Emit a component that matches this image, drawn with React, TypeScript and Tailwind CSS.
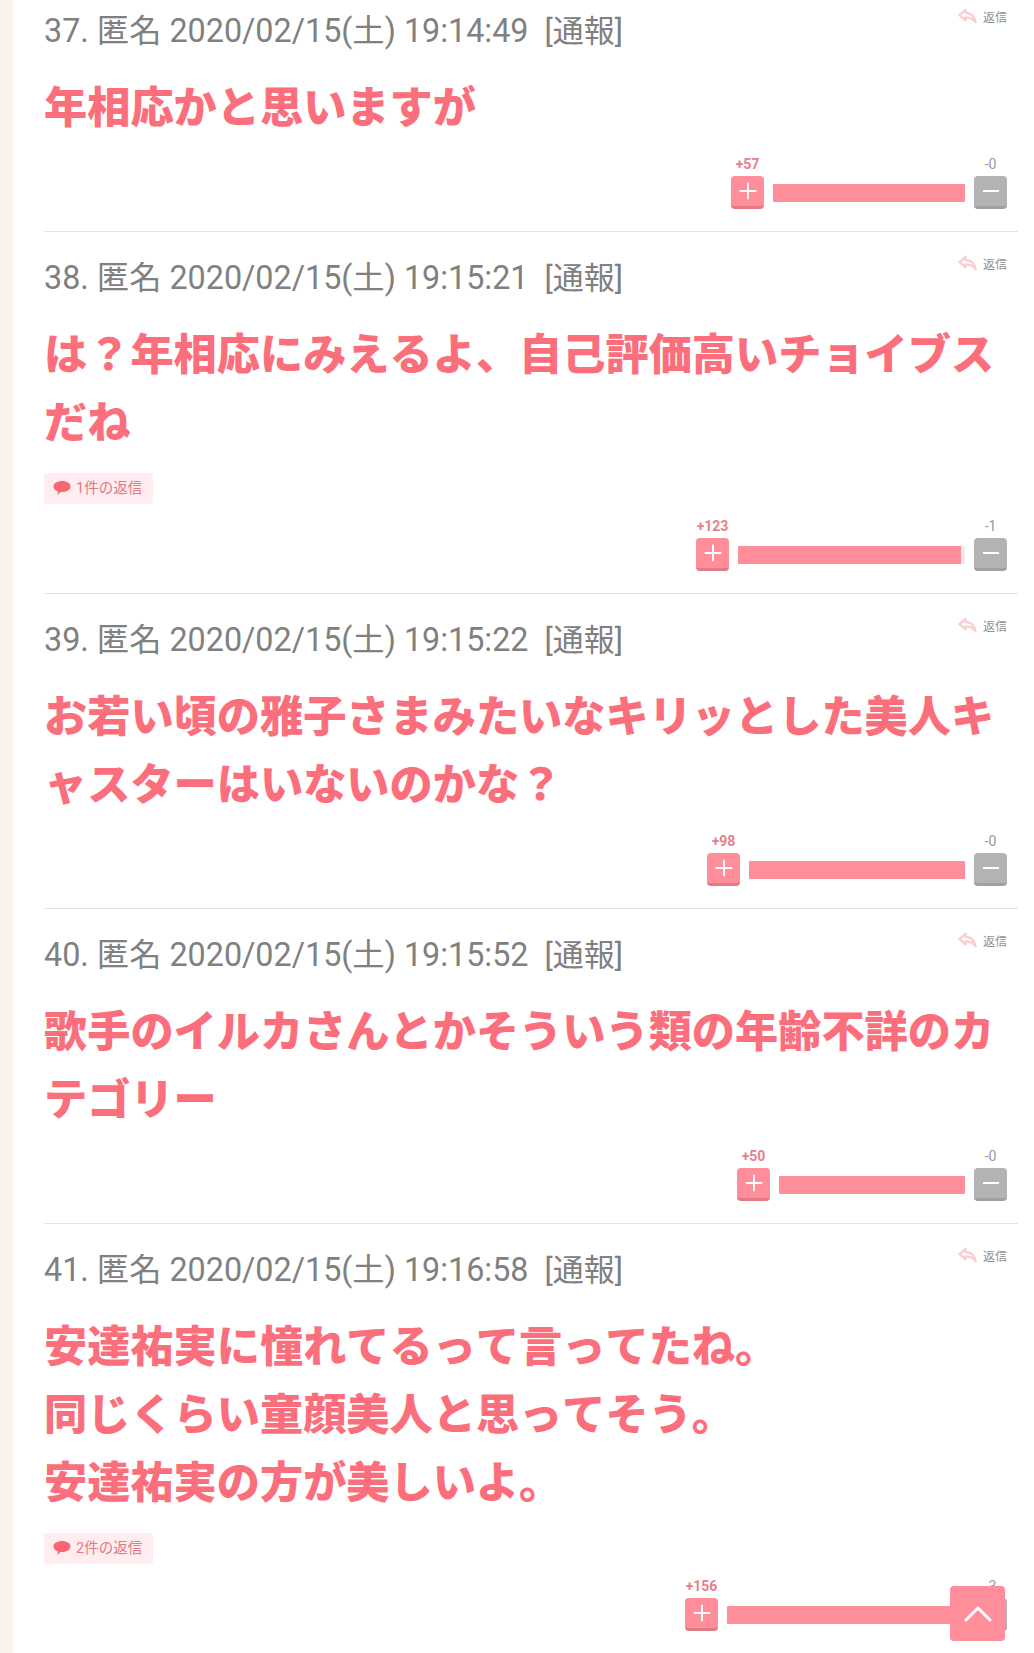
import { ChevronUp, Plus } from "lucide-react";

type Comment = {
  no: number;
  time: string;
  lines: string[];
  replies?: number;
  up: number;
  down: number;
  barW: string;
  pad: string;
};

const comments: Comment[] = [
  { no: 37, time: "19:14:49", lines: ["年相応かと思いますが"], up: 57, down: 0, barW: "w-[192px]", pad: "pt-[9px]" },
  { no: 38, time: "19:15:21", lines: ["は？年相応にみえるよ、自己評価高いチョイブス", "だね"], replies: 1, up: 123, down: 1, barW: "w-[227px]", pad: "pt-[24px]" },
  { no: 39, time: "19:15:22", lines: ["お若い頃の雅子さまみたいなキリッとした美人キ", "ャスターはいないのかな？"], up: 98, down: 0, barW: "w-[216px]", pad: "pt-[24px]" },
  { no: 40, time: "19:15:52", lines: ["歌手のイルカさんとかそういう類の年齢不詳のカ", "テゴリー"], up: 50, down: 0, barW: "w-[186px]", pad: "pt-[24px]" },
  { no: 41, time: "19:16:58", lines: ["安達祐実に憧れてるって言ってたね。", "同じくらい童顔美人と思ってそう。", "安達祐実の方が美しいよ。"], replies: 2, up: 156, down: 3, barW: "w-[238px]", pad: "pt-[24px]" },
];

function ReplyLink() {
  return (
    <div className="flex items-center gap-[6px] pr-[11px] text-[12px] leading-[18px] text-[#8f8f8f]">
      <svg viewBox="0 0 20 16" className="-mt-[4px] h-[16px] w-[19px]" fill="none" stroke="#f9cdd2" strokeWidth="2.4" strokeLinejoin="round">
        <path d="M8 1.500 1.500 7 8 12.500V9.500c4.500 0 7.500 1 10.500 5C17.500 9 14 5 8 4.700V1.500Z" />
      </svg>
      <span>返信</span>
    </div>
  );
}

function Votes({ c }: { c: Comment }) {
  return (
    <div className="flex justify-end pr-[11px]">
      <div className="flex flex-col items-center">
        <span className="text-[14px] font-bold leading-[24px] text-[#e8808c]">+{c.up}</span>
        <button className="flex h-[33px] w-[33px] items-center justify-center rounded-[4px] border-b-[3px] border-[#e07a86] bg-[#ff8d9a] text-white">
          <Plus size={26} strokeWidth={1.8} />
        </button>
      </div>
      <div className={`mx-[9px] mt-[32px] flex h-[18px] overflow-hidden rounded-[1px] bg-[#ececec] ${c.barW}`}>
        <div className="h-full flex-1 bg-[#ff8d9a]" />
        {c.down > 0 ? <div className="h-full w-[4px]" /> : null}
      </div>
      <div className="flex flex-col items-center">
        <span className="text-[14px] leading-[24px] text-[#9a9a9a]">-{c.down}</span>
        <button className="flex h-[33px] w-[33px] items-center justify-center rounded-[4px] border-b-[3px] border-[#a0a0a0] bg-[#b3b3b3]">
          <span className="h-[2px] w-[16px] bg-white" />
        </button>
      </div>
    </div>
  );
}

export default function App() {
  return (
    <div className="relative h-[1653px] overflow-hidden bg-[#faf3ea] pl-[13px] font-['Roboto','Noto_Sans_CJK_JP',sans-serif] [font-kerning:none]">
      <div className="h-full bg-white pl-[31px] pr-[16px]">
        {comments.map((c) => (
          <section key={c.no} className={`border-b border-[#e4e4e4] pb-[22px] ${c.pad}`}>
            <div className="flex items-start justify-between">
              <div className="whitespace-pre text-[32.300px] leading-[44px] text-[#808080]">
                {c.no}. 匿名 2020/02/15(土) {c.time}  <span className="text-[31px]">[通報]</span>
              </div>
              <ReplyLink />
            </div>
            <div className="mt-[21px] text-[43.200px] font-black leading-[68px] text-[#fb6f7c]">
              {c.lines.map((l) => (
                <div key={l} className="whitespace-nowrap">{l}</div>
              ))}
            </div>
            {c.replies ? (
              <div className="mt-[15px] flex h-[31px] w-[109px] items-center gap-[5px] rounded-[2px] bg-[#ffedef] pl-[9px] text-[14.500px] text-[#e57885]">
                <svg viewBox="0 0 18 16" className="-mt-[2px] h-[16px] w-[18px]" fill="#fb6472">
                  <path d="M9 1c4.700 0 8.500 2.300 8.500 5.500S13.700 12 9 12H7.500L4.500 15l.3-3.500C2.300 10.500.5 8.600.5 6.500.5 3.300 4.300 1 9 1Z" />
                </svg>
                <span>{c.replies}件の返信</span>
              </div>
            ) : null}
            <div className={c.replies ? "mt-[10px]" : "mt-[9px]"}><Votes c={c} /></div>
          </section>
        ))}
      </div>
      <button className="absolute right-[29px] top-[1586px] flex h-[55px] w-[55px] items-center justify-center rounded-[4px] bg-[#ff8d9a] text-white">
        <ChevronUp size={48} strokeWidth={1.5} />
      </button>
    </div>
  );
}
